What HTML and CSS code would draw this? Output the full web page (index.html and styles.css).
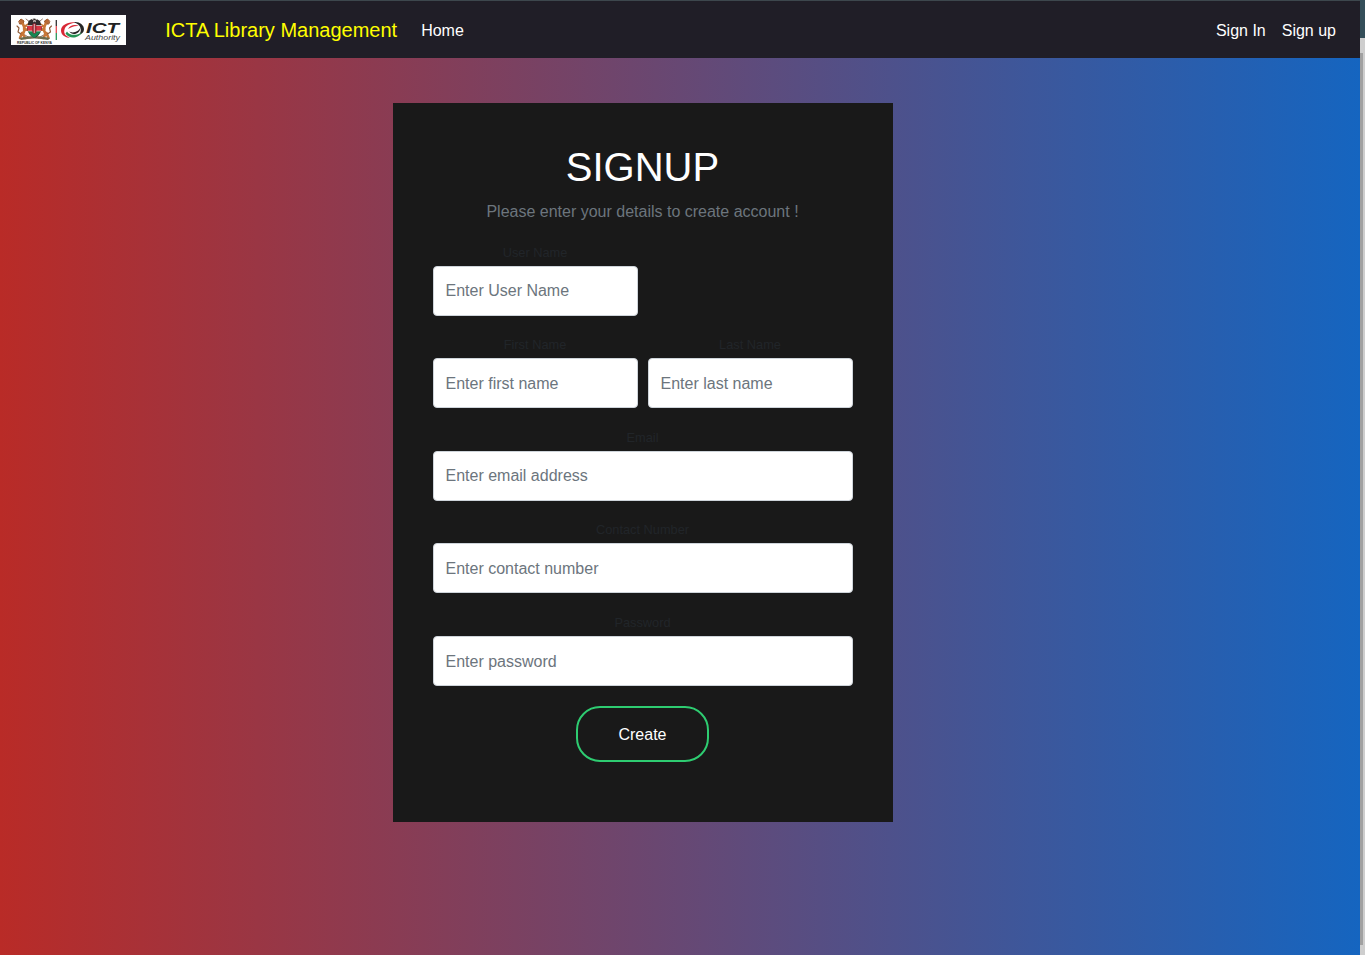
FILE: index.html
```html
<!DOCTYPE html>
<html lang="en">
<head>
<meta charset="utf-8">
<title>ICTA Library Management</title>
<link rel="stylesheet" href="styles.css">
</head>
<body>
<div class="page">
  <nav class="navbar">
    <svg class="logo" width="115" height="30" viewBox="0 0 115 30" role="img" aria-label="ICT Authority">
      <rect width="115" height="30" fill="#fff"/>
      <g stroke-linecap="round" stroke-linejoin="round" fill="none">
        <g id="lion">
          <path d="M8 6 10 4 13 6 12 9 9 9Z" fill="#b96a35" stroke="#9b5528"/>
          <path d="M12 9 14 14 12 19 14 23M11 18 9 23M13 12 18 9M13 14 18 15" stroke="#c97737" stroke-width="2.6"/>
          <path d="M10 19 7 17 8 13 6 11" stroke="#8d5a38" stroke-width="1.1"/>
          <path d="M15 4 20 8M14 20 19 23" stroke="#775548" stroke-width=".8"/>
        </g>
        <use href="#lion" transform="matrix(-1 0 0 1 46.500 0)"/>
      </g>
      <path d="M8 23Q23 19 39 23L37 25Q23 22 10 25Z" fill="#6e6c4d"/>
      <path d="M17.500 6Q23 1 29 6L31 13Q29 21 23.300 23Q17 20 16 13Z" fill="#302b2c"/>
      <path d="M16 11H31L30 16H17Z" fill="#d83743"/>
      <path d="M17 16H30Q27 21 23.300 23Q19 21 17 16Z" fill="#168653"/>
      <path d="M16 10.500H31M17 16H30" stroke="#e7d7d2" stroke-width=".8"/>
      <ellipse cx="23.300" cy="13.500" rx="2.300" ry="5.200" fill="#a22935"/>
      <path d="M23.300 9V18M21 4 25 7M26 4 22 7" stroke="#ede1dc" stroke-width=".8"/>
      <text x="6" y="28.500" class="logo-kenya" textLength="35" lengthAdjust="spacingAndGlyphs">REPUBLIC OF KENYA</text>
      <path d="M45.300 5V11" stroke="#333" stroke-width="1.300"/>
      <path d="M45.300 11V18" stroke="#e64a51" stroke-width="1.300"/>
      <path d="M45.300 18V25" stroke="#28965a" stroke-width="1.300"/>
      <path d="M66 7.500C57 6 50 10 50 15.500C50 20 54 22.500 59 23C54 20.500 52.500 18 53.500 14.500C54.500 10.500 59 8 66 7.500Z" fill="#d82735"/>
      <path d="M63 7.200C68 6.500 73 10 73 14.200C73 17 71 19 68 20C71 16 71 10 63 7.200Z" fill="#252525"/>
      <path d="M56 16.500C58 20.500 66 21 70.500 17.500C68 23.500 58 24.500 54.500 18.500Z" fill="#259454"/>
      <path d="M58 16C61 19 68 17 69.500 12C69.500 19 61 21.500 58 16Z" fill="#252525"/>
      <path d="M57 14C59 10 64 9 68 11C63 10.500 60 12 57 14Z" fill="#d82735"/>
      <text x="75" y="17.500" class="logo-ict" textLength="33" lengthAdjust="spacingAndGlyphs">ICT</text>
      <text x="74" y="24.500" class="logo-authority" textLength="35" lengthAdjust="spacingAndGlyphs">Authority</text>
    </svg>
    <a class="brand">ICTA Library Management</a>
    <a class="nav-link">Home</a>
    <div class="account-links"><a class="nav-link">Sign In</a><a class="nav-link">Sign up</a></div>
  </nav>
  <main>
    <form class="signup-box">
      <h1>SIGNUP</h1>
      <p class="intro">Please enter your details to create account !</p>
      <div class="fields">
        <label class="field">User Name<input type="text" placeholder="Enter User Name"></label>
        <label class="field first">First Name<input type="text" placeholder="Enter first name"></label>
        <label class="field">Last Name<input type="text" placeholder="Enter last name"></label>
        <label class="field wide">Email<input type="email" placeholder="Enter email address"></label>
        <label class="field wide">Contact Number<input type="text" placeholder="Enter contact number"></label>
        <label class="field wide">Password<input type="password" placeholder="Enter password"></label>
      </div>
      <button class="create" type="button">Create</button>
    </form>
  </main>
</div>
<aside class="window-edge">
  <div class="edge-top"></div>
  <div class="edge-track"><div class="edge-thumb"></div></div>
</aside>
</body>
</html>
```
FILE: styles.css
```css
* { box-sizing: border-box; }
body {
  margin: 0;
  height: 955px;
  display: flex;
  overflow: hidden;
  font: 16px/24px "Liberation Sans", Arial, sans-serif;
}
.page {
  width: 1360px;
  height: 955px;
  background: linear-gradient(to right, #b92b27, #1565c0);
}
.navbar {
  height: 58px;
  padding: 1px 16px 0 11px;
  display: flex;
  align-items: center;
  background: #201e27;
  border-top: 1px solid #3d474d;
}
.logo { display: block; flex: none; }
.logo-kenya { font: bold 3.6px "Liberation Sans", sans-serif; fill: #333; }
.logo-ict { font: italic bold 15.5px "Liberation Sans", sans-serif; fill: #222; }
.logo-authority { font: italic 6.8px "Liberation Sans", sans-serif; fill: #444; }
.brand {
  margin: 0 16px 0 39.2px;
  font-size: 20px;
  line-height: 30px;
  color: #ff0;
}
.nav-link { padding: 1px 8px 0; color: #fff; }
.account-links { display: flex; margin-left: auto; }
.signup-box {
  width: 500px;
  height: 719px;
  margin: 45px 0 0 392.5px;
  padding: 40px;
  background: #191919;
  text-align: center;
}
h1 {
  margin: 0 0 9px;
  font-size: 40px;
  line-height: 48px;
  font-weight: 400;
  color: #fff;
}
.intro { margin: 0 0 17px; color: #6c757d; }
.fields {
  display: grid;
  grid-template-columns: 205px 205px;
  column-gap: 10px;
  row-gap: 18.6px;
  padding-top: .52px;
}
.field { font-size: 12.8px; line-height: 22px; color: #212529; }
.first { grid-column: 1; }
.wide { grid-column: 1 / -1; }
.field input {
  display: block;
  width: 100%;
  height: 50px;
  margin-top: 2px;
  padding: 7.4px 12px 6px;
  border: 1px solid #ced4da;
  border-radius: 4px;
  background: #fff;
  font: 16px/24px "Liberation Sans", Arial, sans-serif;
}
.field input::placeholder { color: #6c757d; opacity: 1; }
.create {
  display: block;
  width: 133px;
  height: 56px;
  margin: 20px auto 0;
  padding: 2px 0 0;
  border: 2px solid #2ecc71;
  border-radius: 24px;
  background: none;
  color: #fff;
  font: 16px/24px "Liberation Sans", Arial, sans-serif;
}
.window-edge { width: 5px; height: 955px; display: flex; flex-direction: column; }
.edge-top { height: 38px; background: #344e59; }
.edge-track { flex: 1; padding-top: 15px; background: #cecece; }
.edge-thumb { width: 3px; height: 892px; background: #a1a1a1; }
```
